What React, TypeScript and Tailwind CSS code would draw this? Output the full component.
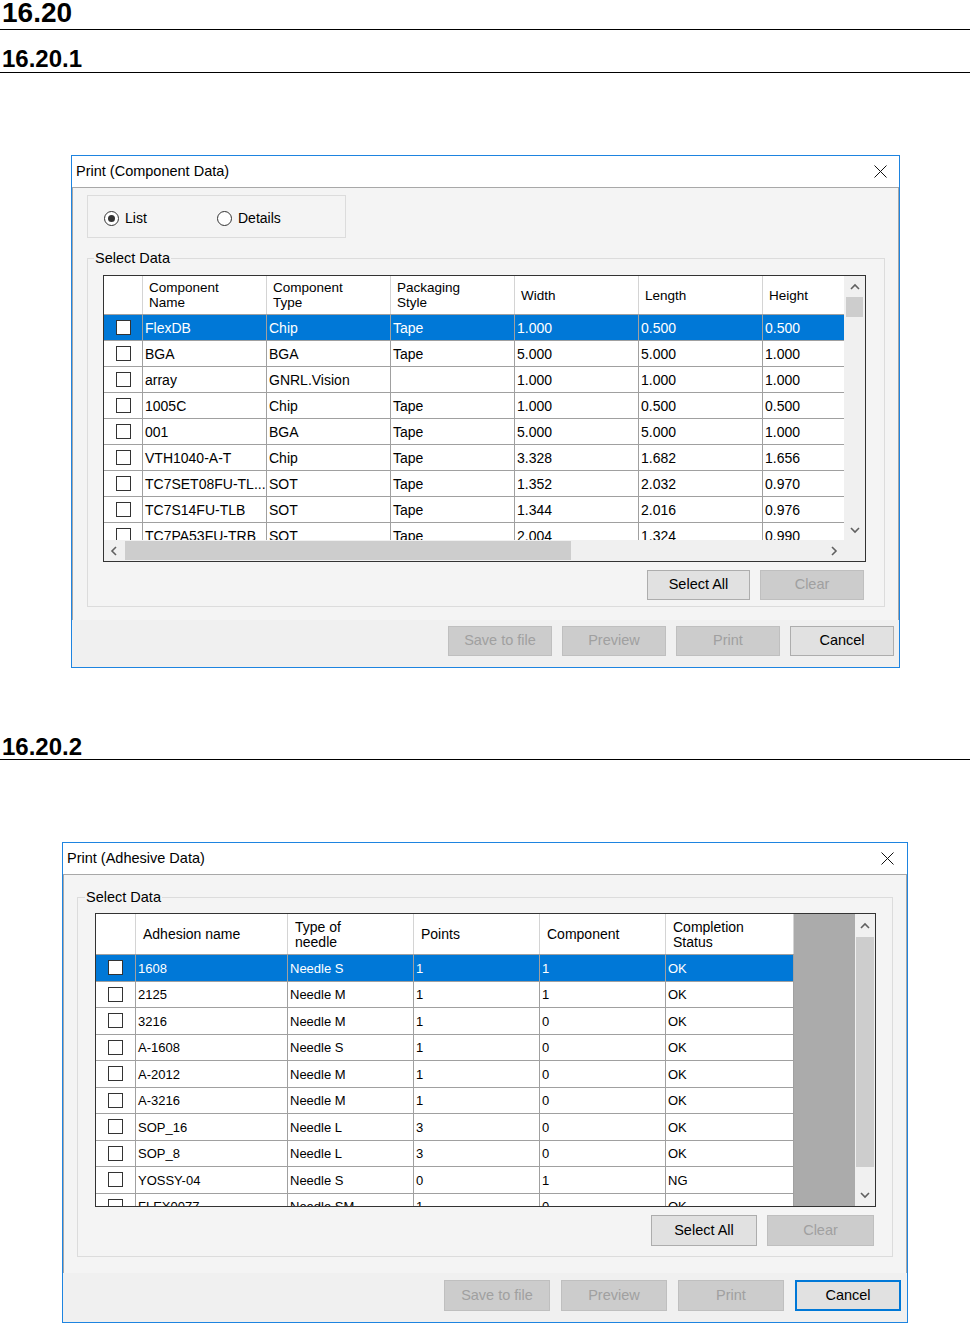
import React from 'react';

const compHead: string[][] = [
  ['Component', 'Name'],
  ['Component', 'Type'],
  ['Packaging', 'Style'],
  ['Width'],
  ['Length'],
  ['Height'],
];

const compRows: string[][] = [
  ['FlexDB', 'Chip', 'Tape', '1.000', '0.500', '0.500'],
  ['BGA', 'BGA', 'Tape', '5.000', '5.000', '1.000'],
  ['array', 'GNRL.Vision', '', '1.000', '1.000', '1.000'],
  ['1005C', 'Chip', 'Tape', '1.000', '0.500', '0.500'],
  ['001', 'BGA', 'Tape', '5.000', '5.000', '1.000'],
  ['VTH1040-A-T', 'Chip', 'Tape', '3.328', '1.682', '1.656'],
  ['TC7SET08FU-TL...', 'SOT', 'Tape', '1.352', '2.032', '0.970'],
  ['TC7S14FU-TLB', 'SOT', 'Tape', '1.344', '2.016', '0.976'],
  ['TC7PA53FU-TRB', 'SOT', 'Tape', '2.004', '1.324', '0.990'],
];

const adhHead: { label: string[]; w: string }[] = [
  { label: ['Adhesion name'], w: 'w-[152px]' },
  { label: ['Type of', 'needle'], w: 'w-[126px]' },
  { label: ['Points'], w: 'w-[126px]' },
  { label: ['Component'], w: 'w-[126px]' },
  { label: ['Completion', 'Status'], w: 'w-[128px]' },
];

const adhRows: string[][] = [
  ['1608', 'Needle S', '1', '1', 'OK'],
  ['2125', 'Needle M', '1', '1', 'OK'],
  ['3216', 'Needle M', '1', '0', 'OK'],
  ['A-1608', 'Needle S', '1', '0', 'OK'],
  ['A-2012', 'Needle M', '1', '0', 'OK'],
  ['A-3216', 'Needle M', '1', '0', 'OK'],
  ['SOP_16', 'Needle L', '3', '0', 'OK'],
  ['SOP_8', 'Needle L', '3', '0', 'OK'],
  ['YOSSY-04', 'Needle S', '0', '1', 'NG'],
  ['FLEX0077', 'Needle SM', '1', '0', 'OK'],
];

function Chevron({ dir }: { dir: 'up' | 'down' | 'left' | 'right' }) {
  const vertical = dir === 'up' || dir === 'down';
  const pts = {
    up: '1,6 5,2 9,6',
    down: '1,2 5,6 9,2',
    left: '6,1 2,5 6,9',
    right: '2,1 6,5 2,9',
  }[dir];
  return (
    <svg
      width={vertical ? 10 : 8}
      height={vertical ? 8 : 10}
      viewBox={vertical ? '0 0 10 8' : '0 0 8 10'}
    >
      <polyline points={pts} fill="none" stroke="#606060" strokeWidth="1.6" />
    </svg>
  );
}

function CloseX() {
  return (
    <svg width="13" height="13" viewBox="0 0 13 13">
      <line x1="0.5" y1="0.5" x2="12.5" y2="12.5" stroke="#111" strokeWidth="1" />
      <line x1="12.5" y1="0.5" x2="0.5" y2="12.5" stroke="#111" strokeWidth="1" />
    </svg>
  );
}

function Check() {
  return <span className="block h-[15px] w-[15px] border border-[#333] bg-white" />;
}

function Radio({ checked, label, className = '' }: { checked?: boolean; label: string; className?: string }) {
  return (
    <div className={`flex items-center ${className}`}>
      <span className="flex h-[15px] w-[15px] items-center justify-center rounded-full border border-[#333] bg-white">
        {checked && <span className="h-[7px] w-[7px] rounded-full bg-[#333]" />}
      </span>
      <span className="ml-[6px] text-[14px]">{label}</span>
    </div>
  );
}

type BtnKind = 'normal' | 'disabled' | 'focus';

function Btn({ label, kind = 'normal', className = '' }: { label: string; kind?: BtnKind; className?: string }) {
  const look =
    kind === 'disabled'
      ? 'border border-[#bfbfbf] bg-[#cccccc] text-[#a0a0a0]'
      : kind === 'focus'
        ? 'border-2 border-[#0078d7] bg-[#e1e1e1] text-black'
        : 'border border-[#adadad] bg-[#e1e1e1] text-black';
  return <div className={`flex items-center justify-center text-[14.5px] ${look} ${className}`}>{label}</div>;
}

function Dialog({
  title,
  className,
  titlePad,
  bodyPad,
  footer,
  children,
}: {
  title: string;
  className: string;
  titlePad: string;
  bodyPad: string;
  footer: React.ReactNode;
  children: React.ReactNode;
}) {
  return (
    <div className={`border border-[#1e84e0] bg-white ${className}`}>
      <div className={`flex h-[31px] items-center justify-between pl-[4px] ${titlePad}`}>
        <span className="text-[14.5px]">{title}</span>
        <CloseX />
      </div>
      <div className={`border-x border-t border-[#a8a8a8] bg-[#f4f4f4] ${bodyPad}`}>{children}</div>
      {footer}
    </div>
  );
}

function ComponentTable() {
  return (
    <div className="ml-[9px] flex h-[287px] w-[763px] flex-col border border-[#333] bg-white">
      <div className="flex h-[264px]">
        <div className="min-w-0 flex-1 overflow-hidden">
          <div className="flex h-[39px] border-b border-[#a0a0a0] bg-white text-[13.5px] leading-[15px]">
            <div className="w-[39px] shrink-0 border-r border-[#d4d4d4]" />
            {compHead.map((h, i) => (
              <div key={i} className="flex w-[124px] shrink-0 items-center border-r border-[#d4d4d4] pl-[6px]">
                <div>
                  {h[0]}
                  {h[1] && <br />}
                  {h[1]}
                </div>
              </div>
            ))}
          </div>
          {compRows.map((r, i) => (
            <div
              key={i}
              className={`flex h-[26px] border-b border-[#a0a0a0] text-[14px] ${
                i === 0 ? 'bg-[#0078d7] text-white' : 'bg-white text-black'
              }`}
            >
              <div className="flex w-[39px] shrink-0 items-center justify-center border-r border-[#a0a0a0]">
                <Check />
              </div>
              {r.map((c, j) => (
                <div
                  key={j}
                  className="flex w-[124px] shrink-0 items-center overflow-hidden whitespace-nowrap border-r border-[#a0a0a0] pl-[2px] pt-[1px]"
                >
                  {c}
                </div>
              ))}
            </div>
          ))}
        </div>
        <div className="flex w-[21px] flex-col bg-[#f0f0f0]">
          <div className="flex h-[21px] items-center justify-center">
            <Chevron dir="up" />
          </div>
          <div className="mx-[2px] h-[20px] bg-[#cdcdcd]" />
          <div className="flex-1" />
          <div className="flex h-[21px] items-center justify-center">
            <Chevron dir="down" />
          </div>
        </div>
      </div>
      <div className="flex h-[21px]">
        <div className="flex flex-1 bg-[#f0f0f0]">
          <div className="flex w-[20px] items-center justify-center">
            <Chevron dir="left" />
          </div>
          <div className="my-[1px] ml-[1px] w-[446px] bg-[#cdcdcd]" />
          <div className="flex-1" />
          <div className="flex w-[20px] items-center justify-center">
            <Chevron dir="right" />
          </div>
        </div>
        <div className="w-[21px] bg-[#f0f0f0]" />
      </div>
    </div>
  );
}

function AdhesiveTable() {
  return (
    <div className="ml-[10px] flex h-[294px] w-[781px] border border-[#333]">
      <div className="min-w-0 flex-1 overflow-hidden bg-[#ababab]">
        <div className="w-[698px] bg-white">
          <div className="flex h-[41px] border-b border-[#a0a0a0] text-[14px] leading-[15px]">
            <div className="w-[40px] shrink-0 border-r border-[#d4d4d4]" />
            {adhHead.map((h, i) => (
              <div key={i} className={`flex shrink-0 items-center border-r border-[#d4d4d4] pl-[7px] pt-[1px] ${h.w}`}>
                <div>
                  {h.label[0]}
                  {h.label[1] && <br />}
                  {h.label[1]}
                </div>
              </div>
            ))}
          </div>
          {adhRows.map((r, i) => (
            <div
              key={i}
              className={`flex h-[26.5px] border-b border-[#a0a0a0] text-[13px] ${
                i === 0 ? 'bg-[#0078d7] text-white' : 'bg-white text-black'
              }`}
            >
              <div className="flex w-[40px] shrink-0 items-center justify-center border-r border-[#a0a0a0]">
                <Check />
              </div>
              {r.map((c, j) => (
                <div
                  key={j}
                  className={`flex shrink-0 items-center overflow-hidden whitespace-nowrap border-r border-[#a0a0a0] pl-[2px] pt-[1px] ${adhHead[j].w}`}
                >
                  {c}
                </div>
              ))}
            </div>
          ))}
        </div>
      </div>
      <div className="flex w-[20px] flex-col bg-[#f0f0f0]">
        <div className="flex h-[23px] items-center justify-center">
          <Chevron dir="up" />
        </div>
        <div className="mx-[1px] h-[230px] bg-[#cdcdcd]" />
        <div className="flex-1" />
        <div className="flex h-[23px] items-center justify-center">
          <Chevron dir="down" />
        </div>
      </div>
    </div>
  );
}

export default function App() {
  return (
    <div className="min-h-screen bg-white text-black font-['Liberation_Sans',Arial,sans-serif]">
      <div className="border-b border-black pb-[3px] pl-[2px] text-[28px] font-bold leading-[26px]">16.20</div>
      <div className="mt-[17px] border-b border-black pb-[1px] pl-[2px] text-[24px] font-bold leading-[24px]">
        16.20.1
      </div>

      <Dialog
        title="Print (Component Data)"
        className="ml-[71px] mt-[82px] w-[829px]"
        titlePad="pr-[12px]"
        bodyPad="pb-[13px] pl-[14px] pr-[13px] pt-[7px]"
        footer={
          <div className="flex h-[47px] justify-end gap-[10px] bg-[#f0f0f0] pr-[5px] pt-[6px]">
            <Btn label="Save to file" kind="disabled" className="h-[30px] w-[104px]" />
            <Btn label="Preview" kind="disabled" className="h-[30px] w-[104px]" />
            <Btn label="Print" kind="disabled" className="h-[30px] w-[104px]" />
            <Btn label="Cancel" className="h-[30px] w-[104px]" />
          </div>
        }
      >
        <div className="flex h-[43px] w-[259px] items-center border border-[#dcdcdc] pl-[16px] pt-[3px]">
          <Radio checked label="List" className="w-[113px]" />
          <Radio label="Details" />
        </div>
        <fieldset className="mt-[12px] border border-[#dcdcdc] px-[6px] pb-[6px]">
          <legend className="px-[1px] text-[14.5px] leading-[16px]">Select Data</legend>
          <div className="mt-[9px]">
            <ComponentTable />
          </div>
          <div className="ml-[9px] mt-[8px] flex w-[763px] justify-end gap-[10px] pr-[2px]">
            <Btn label="Select All" className="h-[30px] w-[103px]" />
            <Btn label="Clear" kind="disabled" className="h-[30px] w-[104px]" />
          </div>
        </fieldset>
      </Dialog>

      <div className="mt-[67px] border-b border-black pl-[2px] text-[24px] font-bold leading-[24px]">16.20.2</div>

      <Dialog
        title="Print (Adhesive Data)"
        className="ml-[62px] mt-[82px] w-[846px]"
        titlePad="pr-[13px]"
        bodyPad="pb-[16px] pl-[13px] pr-[13px] pt-[14px]"
        footer={
          <div className="flex h-[49px] justify-end gap-[11px] bg-[#f0f0f0] pr-[6px] pt-[7px]">
            <Btn label="Save to file" kind="disabled" className="h-[31px] w-[106px]" />
            <Btn label="Preview" kind="disabled" className="h-[31px] w-[106px]" />
            <Btn label="Print" kind="disabled" className="h-[31px] w-[106px]" />
            <Btn label="Cancel" kind="focus" className="h-[31px] w-[106px]" />
          </div>
        }
      >
        <fieldset className="border border-[#dcdcdc] px-[7px] pb-[10px]">
          <legend className="px-[1px] text-[14.5px] leading-[16px]">Select Data</legend>
          <div className="mt-[8px]">
            <AdhesiveTable />
          </div>
          <div className="ml-[10px] mt-[8px] flex w-[781px] justify-end gap-[10px] pr-[2px]">
            <Btn label="Select All" className="h-[31px] w-[106px]" />
            <Btn label="Clear" kind="disabled" className="h-[31px] w-[107px]" />
          </div>
        </fieldset>
      </Dialog>
    </div>
  );
}
